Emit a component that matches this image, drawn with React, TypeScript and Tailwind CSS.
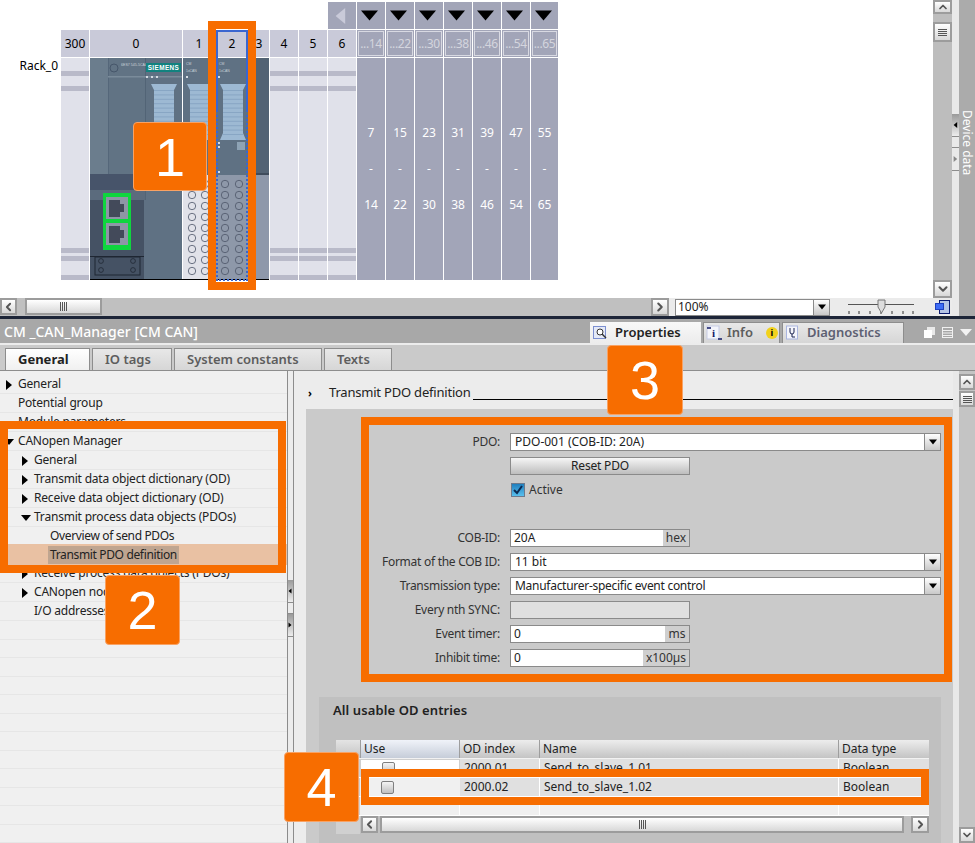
import { ChevronDown, ChevronLeft, ChevronRight, ChevronUp } from "lucide-react";
import type { ReactNode } from "react";

const bands = [13, 5, 10, 5, 157, 5, 3, 5, 14, 5];
const expansions = [
  ["...14", "7", "14", 28],
  ["...22", "15", "22", 28],
  ["...30", "23", "30", 28],
  ["...38", "31", "38", 28],
  ["...46", "39", "46", 28],
  ["...54", "47", "54", 28],
  ["...65", "55", "65", 27],
] as const;

function EmptySlot({ width }: { width: string }) {
  return (
    <div className={`flex flex-col ${width}`}>
      {bands.map((h, i) => (
        <div key={i} className={i % 2 ? "bg-[#b9bac9]" : "bg-[#e0e1ea]"} style={{ height: h }} />
      ))}
    </div>
  );
}

function HeaderCell({ label, width }: { label: string; width: string }) {
  return (
    <div className={`flex h-[27px] items-center justify-center bg-[#c9cad9] text-[12px] text-black ${width}`}>
      {label}
    </div>
  );
}

function Tri({ dir, className = "" }: { dir: "right" | "down" | "left"; className?: string }) {
  const pts = dir === "right" ? "1,0 7,5 1,10" : dir === "left" ? "7,0 1,5 7,10" : "0,2 10,2 5,8";
  return (
    <svg width="10" height="10" viewBox="0 0 10 10" className={className} fill="currentColor">
      <polygon points={pts} />
    </svg>
  );
}

// x is the page position of the connector's left edge
function Connector({ x }: { x: number }) {
  const lines = Array.from({ length: 11 }, (_, i) => 90 + i * 4.4);
  return (
    <g transform={`translate(${x - 180} -58)`}>
      <polygon points="90,84 116,84 113,90 113,133 116,140 90,140 93,133 93,90" fill="#9db9d3" />
      {lines.map((y) => (
        <rect key={y} x="93" y={y} width="20" height="1" fill="#88a6c4" />
      ))}
    </g>
  );
}

function Holes({ xs }: { xs: number[] }) {
  const ys = [184, 195, 206, 217, 228, 238, 249, 260, 271];
  return (
    <g fill="none" stroke="#4c5668" strokeWidth="0.8">
      {ys.flatMap((y) => xs.map((x) => <circle key={`${x}-${y}`} cx={x - 90} cy={y - 58} r="3.7" />))}
    </g>
  );
}

function Leds({ x, y, n = 1 }: { x: number; y: number; n?: number }) {
  return (
    <g fill="#d5dbe2">
      {Array.from({ length: n }, (_, i) => (
        <rect key={i} x={x - 90 + i * 5} y={y - 58} width="2" height="2" />
      ))}
    </g>
  );
}

function ModuleArt() {
  return (
    <svg width="179" height="222" viewBox="0 0 179 222" className="block shrink-0">
      <rect width="179" height="222" fill="#5f7183" />
      <rect x="0" width="18" height="116" fill="#6b7d8d" />
      <rect x="18" y="0" width="37" height="116" fill="#617384" />
      <rect x="18" y="0" width="1" height="116" fill="#55677a" />
      <rect x="55" y="0" width="1" height="142" fill="#526476" />
      <rect x="18" y="18" width="74" height="1.5" fill="#7a8b9a" />
      <circle cx="24" cy="10" r="4" fill="none" stroke="#46566a" />
      <text x="31" y="8" fontSize="3.6" fill="#c9d2da" fontFamily="Liberation Sans">6ES7 545-5CA00</text>
      <rect x="56" y="5" width="35" height="9" fill="#12827f" />
      <text x="73.5" y="12.2" fontSize="6.4" fontWeight="700" fill="#fff" textAnchor="middle" fontFamily="Liberation Sans" letterSpacing="0.4">SIEMENS</text>
      <Leds x={146} y={76} n={3} />
      <Connector x={151} />
      <rect x="0" y="116" width="92" height="16" fill="#47546a" />
      <rect x="0" y="132" width="55" height="10" fill="#5b6b7d" />
      <rect x="0" y="142" width="54" height="80" fill="#455264" />
      <rect x="13" y="135" width="28" height="57" fill="#0fd63e" />
      <rect x="16" y="139" width="22" height="22" fill="#8e96a6" />
      <rect x="16" y="165" width="22" height="22" fill="#8e96a6" />
      <path d="M19 142h11v4h4v8h-4v5h-11z" fill="#434a5a" />
      <path d="M19 168h11v4h4v8h-4v5h-11z" fill="#434a5a" />
      <rect x="0" y="198" width="54" height="1" fill="#1f2733" />
      <rect x="5" y="199" width="45" height="18" fill="none" stroke="#1f2733" />
      <g fill="none" stroke="#1f2733" strokeWidth="0.8">
        <circle cx="11" cy="203" r="2.4" />
        <circle cx="11" cy="212" r="2.4" />
        <circle cx="43" cy="203" r="2.4" />
        <circle cx="43" cy="212" r="2.4" />
      </g>
      <rect x="92" y="0" width="1" height="222" fill="#fff" />
      <rect x="93" y="117" width="33" height="105" fill="#e1e2e9" />
      <text x="96" y="7" fontSize="3.4" fill="#c9d2da" fontFamily="Liberation Sans">CM</text>
      <text x="96" y="14" fontSize="3.4" fill="#c9d2da" fontFamily="Liberation Sans">1xCAN</text>
      <Leds x={186} y={76} />
      <Connector x={187} />
      <Holes xs={[192, 205]} />
      <rect x="126" y="0" width="33" height="117" fill="#5f7183" />
      <rect x="126" y="117" width="33" height="105" fill="#8e98a9" />
      <text x="129" y="7" fontSize="3.4" fill="#c9d2da" fontFamily="Liberation Sans">CM</text>
      <text x="129" y="14" fontSize="3.4" fill="#c9d2da" fontFamily="Liberation Sans">1xCAN</text>
      <Leds x={218} y={76} />
      <Connector x={220} />
      <rect x="147" y="84" width="8" height="8" fill="#8ea3b5" />
      <Leds x={218} y={142} />
      <Leds x={218} y={146} />
      <Leds x={218} y={171} />
      <Holes xs={[225, 239]} />
      <rect x="159" y="0" width="20" height="117" fill="#536374" />
      <rect x="159" y="115" width="20" height="2" fill="#3f4c5c" />
      <rect x="159" y="117" width="20" height="105" fill="#8e98aa" />
      <rect x="0" y="221" width="179" height="1" fill="#000" />
    </svg>
  );
}

function ScrollBtn({ children, className = "" }: { children: ReactNode; className?: string }) {
  return (
    <div className={`flex shrink-0 items-center justify-center border-2 border-[#9c9c9c] bg-gradient-to-b from-white to-[#d8d8d8] text-[#555] ${className}`}>
      {children}
    </div>
  );
}

function Grip({ vertical = false }: { vertical?: boolean }) {
  return (
    <div className={`flex ${vertical ? "flex-col gap-px" : "gap-px"}`}>
      {[0, 1, 2, 3].map((i) => (
        <div key={i} className={`bg-[#555] ${vertical ? "h-px w-[9px]" : "h-[9px] w-px"}`} />
      ))}
    </div>
  );
}

function HandleBlock({ dir, className = "" }: { dir: "left" | "right"; className?: string }) {
  return (
    <div className={`flex h-[23px] items-center justify-center border-b border-[#8c8c8c] bg-gradient-to-b from-[#9a9a9a] to-[#ededed] text-black ${className}`}>
      <Tri dir={dir} className="h-[6px] w-[6px]" />
    </div>
  );
}

function TreeRow({ label, indent, arrow, selected }: { label?: string; indent: number; arrow?: "right" | "down"; selected?: boolean }) {
  return (
    <div
      className={`relative flex h-[19px] items-center border-b border-[#e6e6e6] text-[12px] ${
        indent === 50 ? "tracking-[-0.35px]" : "tracking-[-0.2px]"
      } ${selected ? "border-b-0 bg-[#e9c1a3] shadow-[0_-2px_0_#e9c1a3,0_1px_0_#e9c1a3]" : ""}`}
    >
      {arrow && (
        <Tri dir={arrow} className="absolute top-[5px] text-black" />
      )}
      <span
        className={`whitespace-nowrap text-[#222] ${selected ? "bg-[#bfa590] px-[2px]" : ""}`}
        style={{ marginLeft: selected ? indent - 2 : indent }}
      >
        {label}
      </span>
    </div>
  );
}

function TabLabel({ children, active, width }: { children: ReactNode; active?: boolean; width: string }) {
  return (
    <div
      className={`flex h-[22px] items-center border border-b-0 border-[#8d8d8d] pl-[12px] text-[13px] ${width} ${
        active ? "bg-gradient-to-b from-white to-[#f0f0f0] font-bold text-[#222]" : "bg-gradient-to-b from-[#e8e8e8] to-[#d6d6d6] font-semibold text-[#5d5d5d]"
      }`}
    >
      {children}
    </div>
  );
}

function DropArrow() {
  return (
    <div className="flex h-full w-[16px] items-center justify-center border-l border-[#8a8a8a] bg-gradient-to-b from-white to-[#c9c9c9] text-black">
      <Tri dir="down" className="h-[8px] w-[8px]" />
    </div>
  );
}

function Select({ value, tight }: { value: string; tight?: boolean }) {
  return (
    <div className="flex h-[18px] w-[431px] items-center justify-between border border-[#8a8a8a] bg-white pl-[4px]">
      <span className={tight ? "tracking-[-0.28px]" : ""}>{value}</span>
      <DropArrow />
    </div>
  );
}

function UnitInput({ value, unit, unitWidth }: { value?: string; unit: string; unitWidth: string }) {
  return (
    <div className="flex h-[18px] w-[180px] items-center border border-[#8a8a8a] bg-white pl-[3px]">
      <span className="flex-1">{value}</span>
      <span className={`flex h-full items-center justify-center bg-[#cfcfcf] text-[#333] ${unitWidth}`}>{unit}</span>
    </div>
  );
}

function FormRow({ label, children }: { label?: string; children?: ReactNode }) {
  return (
    <div className="flex h-[18px] items-center gap-[10px]">
      <div className="w-[194px] whitespace-nowrap text-right tracking-[-0.27px] text-[#333]">{label}</div>
      {children}
    </div>
  );
}

function Frame({ className }: { className: string }) {
  return <div className={`absolute border-[8px] border-[#f76d00] ${className}`} />;
}

function Badge({ n, className }: { n: string; className: string }) {
  return (
    <div
      className={`absolute flex items-center justify-center rounded-[4px] border border-[#f9a263] bg-[#f76d00] text-[54px] leading-none text-white ${className}`}
      style={{ fontFamily: '"Liberation Sans", sans-serif' }}
    >
      {n}
    </div>
  );
}

export default function App() {
  return (
    <div
      className="relative flex h-[843px] w-[975px] flex-col overflow-hidden bg-white text-[12px] text-[#222]"
      style={{ fontFamily: '"Noto Sans", sans-serif' }}
    >
      {/* device view */}
      <div className="flex h-[316px] shrink-0">
        <div className="flex min-w-0 flex-1 flex-col">
          <div className="flex h-[298px] pt-[2px]">
            <div className="w-[61px] shrink-0 pt-[55px] pr-[3px] text-right text-[12px] text-black">Rack_0</div>
            <div className="flex flex-col">
              <div className="mb-px flex h-[27px] gap-px pl-[267px]">
                <div className="flex w-[28px] items-center justify-center bg-[#a2a5b8] text-[#c9cad9]">
                  <Tri dir="left" className="h-[16px] w-[16px]" />
                </div>
                {expansions.map(([key, , , w]) => (
                  <div key={key} className="flex items-center justify-center bg-[#a2a5b8] pr-[3px] text-black" style={{ width: w }}>
                    <Tri dir="down" className="h-[17px] w-[17px] shrink-0" />
                  </div>
                ))}
              </div>
              <div className="flex gap-px">
                <HeaderCell label="300" width="w-[28px]" />
                <HeaderCell label="0" width="w-[92px]" />
                <HeaderCell label="1" width="w-[32px]" />
                <HeaderCell label="2" width="w-[32px]" />
                <HeaderCell label="3" width="w-[20px]" />
                <HeaderCell label="4" width="w-[28px]" />
                <HeaderCell label="5" width="w-[28px]" />
                <HeaderCell label="6" width="w-[28px]" />
                {expansions.map(([key, , , w]) => (
                  <div key={key} className="flex h-[27px] items-center justify-center bg-[#a2a5b8] p-px" style={{ width: w }}>
                    <div className="flex h-full w-full items-center justify-center border border-[#d8d9e2] text-[12px] tracking-[-0.4px] text-[#d4d5de]">{key}</div>
                  </div>
                ))}
              </div>
              <div className="mt-px flex gap-px">
                <EmptySlot width="w-[28px]" />
                <ModuleArt />
                <EmptySlot width="w-[28px]" />
                <EmptySlot width="w-[28px]" />
                <EmptySlot width="w-[28px]" />
                {expansions.map(([key, from, to, w]) => (
                  <div key={key} className="flex h-[222px] flex-col items-center gap-[18px] bg-[#a2a5b8] pt-[66px] text-[12px] text-white" style={{ width: w }}>
                    <span className="h-[18px] leading-[18px]">{from}</span>
                    <span className="h-[18px] leading-[18px]">-</span>
                    <span className="h-[18px] leading-[18px]">{to}</span>
                  </div>
                ))}
              </div>
            </div>
          </div>
          <div className="flex h-[18px] items-stretch">
            <div className="flex w-[651px] bg-[#c0c0c0] pb-px">
              <ScrollBtn className="w-[17px]"><ChevronLeft size={14} strokeWidth={3.5} /></ScrollBtn>
              <ScrollBtn className="ml-[8px] w-[77px]"><Grip /></ScrollBtn>
            </div>
            <div className="flex flex-1 items-center bg-[#ebebeb]">
              <ScrollBtn className="h-[18px] w-[18px]"><ChevronRight size={14} strokeWidth={3.5} /></ScrollBtn>
              <div className="ml-[6px] flex h-[17px] w-[155px] items-center justify-between border border-[#8a8a8a] bg-white pl-[2px] text-[12px] text-[#222]">
                <span>100%</span>
                <DropArrow />
              </div>
              <svg width="68" height="16" viewBox="0 0 68 16" className="ml-[18px]">
                <rect x="0" y="5" width="66" height="1" fill="#555" />
                <path d="M1 12v3M11 12v3M22 12v3M33 12v3M44 12v3M55 12v3M65 12v3" stroke="#333" />
                <path d="M30 1h7v7l-3.5 6-3.5-6z" fill="#ddd" stroke="#777" />
              </svg>
            </div>
          </div>
        </div>
        <div className="flex w-[19px] shrink-0 flex-col bg-[#bdbdbd]">
          <ScrollBtn className="h-[14px]"><ChevronUp size={12} strokeWidth={3.5} /></ScrollBtn>
          <ScrollBtn className="mt-[8px] h-[20px]"><Grip vertical /></ScrollBtn>
          <div className="flex-1" />
          <ScrollBtn className="h-[18px]"><ChevronDown size={14} strokeWidth={3.5} /></ScrollBtn>
          <div className="flex h-[18px] items-center justify-center bg-[#ebebeb]">
            <svg width="15" height="14" viewBox="0 0 15 14">
              <rect x="4.5" y="0.5" width="10" height="13" fill="#b5c4e6" stroke="#0a1a70" />
              <rect x="0.5" y="3.5" width="8" height="6" fill="#3e6cf5" stroke="#1d3fc0" />
            </svg>
          </div>
        </div>
        <div className="flex w-[7px] shrink-0 flex-col bg-[#e9e9e9] pt-[114px]">
          <HandleBlock dir="left" />
          <div className="h-[11px] border-b border-[#8c8c8c]" />
          <div className="flex h-[23px] items-center justify-center border-b border-[#8c8c8c] text-[#888]">
            <Tri dir="right" className="h-[6px] w-[6px]" />
          </div>
        </div>
        <div className="flex w-[16px] shrink-0 justify-center bg-[#ababab] pt-[110px] pl-[1px]">
          <span className="h-fit text-[12px] leading-[15px] whitespace-nowrap text-white [writing-mode:vertical-rl]">Device data</span>
        </div>
      </div>

      <div className="h-[3px] shrink-0 bg-[#1d2538]" />

      {/* inspector title bar */}
      <div className="flex h-[24px] shrink-0 items-end justify-between bg-[#a8a8a8]">
        <div className="self-center pl-[4px] text-[14px] font-medium text-white">CM _CAN_Manager [CM CAN]</div>
        <div className="flex items-end">
          <div className="flex items-end gap-[2px]">
            <div className="flex h-[21px] w-[111px] items-center gap-[8px] bg-gradient-to-b from-[#f8f8f8] to-[#ececec] pl-[3px] text-[13px] font-semibold text-[#222]">
              <svg width="14" height="14" viewBox="0 0 14 14">
                <rect x="0.5" y="0.5" width="12" height="12" fill="#e4e9f7" stroke="#7c8fd0" />
                <circle cx="7" cy="6" r="3" fill="#fff" stroke="#333" />
                <path d="M9 8l4 4" stroke="#333" strokeWidth="1.5" />
              </svg>
              Properties
            </div>
            <div className="flex h-[21px] w-[77px] items-center gap-[5px] border border-b-0 border-[#8d8d8d] bg-gradient-to-b from-[#e8e8e8] to-[#d6d6d6] pl-[2px] text-[13px] font-semibold text-[#5d5d5d]">
              <svg width="16" height="16" viewBox="0 0 16 16">
                <rect x="1" y="1" width="12" height="13" fill="#f4f5fb" stroke="#c5cbe6" />
                <path d="M1 3h4M12 14h4" stroke="#111a66" strokeWidth="1.5" />
                <text x="6" y="12" fontSize="11" fontWeight="700" fill="#111a66" fontFamily="Liberation Serif">i</text>
              </svg>
              <span className="mr-[8px]">Info</span>
              <span className="flex h-[12px] w-[12px] items-center justify-center rounded-full bg-[#f2d21c] text-[9px] font-bold text-black">i</span>
            </div>
            <div className="flex h-[21px] w-[122px] items-center gap-[7px] border border-b-0 border-[#8d8d8d] bg-gradient-to-b from-[#e8e8e8] to-[#d6d6d6] pl-[3px] text-[13px] font-semibold text-[#5d6072]">
              <svg width="14" height="16" viewBox="0 0 14 16">
                <rect x="0.5" y="1" width="11" height="13" fill="#f4f5fb" stroke="#a9b5e0" />
                <path d="M4 3v4a2 2 0 0 0 4 0V3M6 9v3h3" fill="none" stroke="#1a2250" />
              </svg>
              Diagnostics
            </div>
          </div>
          <div className="flex h-[21px] w-[71px] items-center justify-end gap-[7px] pr-[3px]">
            <svg width="11" height="11" viewBox="0 0 11 11">
              <rect x="3" y="0" width="8" height="8" fill="#fff" opacity="0.75" />
              <rect x="0" y="3" width="8" height="8" fill="#fff" />
            </svg>
            <svg width="11" height="11" viewBox="0 0 11 11" fill="none" stroke="#f0f0f0">
              <rect x="0.5" y="0.5" width="10" height="10" />
              <path d="M0 3.5h11M0 6h11M0 8.5h11" />
            </svg>
            <svg width="12" height="8" viewBox="0 0 12 8"><polygon points="0,0 12,0 6,7" fill="#f2f2f2" /></svg>
          </div>
        </div>
      </div>

      {/* secondary tabs */}
      <div className="flex h-[28px] shrink-0 items-end gap-[2px] border-t-2 border-b border-[#8d8d8d] border-t-[#ececec] bg-[#cacaca] pl-[5px]">
        <TabLabel active width="w-[85px]">General</TabLabel>
        <TabLabel width="w-[80px]">IO tags</TabLabel>
        <TabLabel width="w-[148px]">System constants</TabLabel>
        <TabLabel width="w-[68px]">Texts</TabLabel>
      </div>

      <div className="flex min-h-0 flex-1">
        {/* tree */}
        <div className="flex w-[287px] shrink-0 flex-col overflow-hidden bg-[#f0f0f0] pt-[4px]">
          <div className="[&_svg]:left-[5px]"><TreeRow label="General" indent={18} arrow="right" /></div>
          <TreeRow label="Potential group" indent={18} />
          <TreeRow label="Module parameters" indent={18} />
          <div className="[&_svg]:left-[4px]"><TreeRow label="CANopen Manager" indent={18} arrow="down" /></div>
          <div className="[&_svg]:left-[21px]">
            <TreeRow label="General" indent={34} arrow="right" />
            <TreeRow label="Transmit data object dictionary (OD)" indent={34} arrow="right" />
            <TreeRow label="Receive data object dictionary (OD)" indent={34} arrow="right" />
            <TreeRow label="Transmit process data objects (PDOs)" indent={34} arrow="down" />
          </div>
          <TreeRow label="Overview of send PDOs" indent={50} />
          <TreeRow label="Transmit PDO definition" indent={50} selected />
          <div className="[&_svg]:left-[21px]">
            <TreeRow label="Receive process data objects (PDOs)" indent={34} arrow="right" />
            <TreeRow label="CANopen nodes" indent={34} arrow="right" />
          </div>
          <TreeRow label="I/O addresses" indent={34} />
          {[0, 1, 2, 3, 4, 5, 6, 7, 8, 9, 10, 11].map((i) => (
            <TreeRow key={i} indent={0} />
          ))}
        </div>

        {/* splitter */}
        <div className="flex w-[7px] shrink-0 flex-col border-x border-[#8c8c8c] bg-[#ececec] pt-[209px]">
          <HandleBlock dir="left" />
          <div className="h-[11px] border-b border-[#8c8c8c]" />
          <HandleBlock dir="right" />
        </div>
        <div className="w-[12px] shrink-0 bg-[#ececec]" />

        {/* form */}
        <div className="flex min-w-0 flex-1 flex-col">
          <div className="flex h-[38px] shrink-0 items-center bg-[#ececec] pt-[6px]">
            <span className="w-[23px] pl-[2px] text-[11px] font-bold text-black">›</span>
            <span className="text-[13px] tracking-[-0.2px] text-[#222]">Transmit PDO definition</span>
            <div className="mt-[12px] ml-[2px] h-px flex-1 bg-black" />
          </div>
          <div className="flex min-h-0 flex-1 flex-col bg-[#cacaca] pt-[24px]">
            <div className="flex flex-col gap-[6px]">
              <FormRow label="PDO:"><Select value="PDO-001 (COB-ID: 20A)" /></FormRow>
              <FormRow>
                <div className="flex h-[18px] w-[180px] items-center justify-center border border-[#8a8a8a] bg-gradient-to-b from-[#f6f6f6] to-[#bdbdbd] tracking-[-0.2px] text-[#222]">Reset PDO</div>
              </FormRow>
              <FormRow>
                <div className="flex items-center gap-[4px] pl-px">
                  <div className="flex h-[14px] w-[14px] items-center justify-center border border-[#6d7a8c] bg-gradient-to-b from-[#1f7fbe] to-[#59c0ee]">
                    <svg width="10" height="10" viewBox="0 0 10 10" fill="none" stroke="#0b2a52" strokeWidth="2">
                      <path d="M1 5l3 3 5-7" />
                    </svg>
                  </div>
                  <span className="text-[#333]">Active</span>
                </div>
              </FormRow>
              <FormRow />
              <FormRow label="COB-ID:"><UnitInput value="20A" unit="hex" unitWidth="w-[26px]" /></FormRow>
              <FormRow label="Format of the COB ID:"><Select value="11 bit" /></FormRow>
              <FormRow label="Transmission type:"><Select value="Manufacturer-specific event control" tight /></FormRow>
              <FormRow label="Every nth SYNC:">
                <div className="h-[18px] w-[180px] border border-[#8a8a8a] bg-[#dfdfdf]" />
              </FormRow>
              <FormRow label="Event timer:"><UnitInput value="0" unit="ms" unitWidth="w-[24px]" /></FormRow>
              <FormRow label="Inhibit time:"><UnitInput value="0" unit="x100µs" unitWidth="w-[46px]" /></FormRow>
            </div>

            <div className="mt-[30px] mr-[12px] ml-[13px] flex flex-1 flex-col bg-[#c0c0c0] pr-[12px] pl-[17px]">
              <div className="-ml-[3px] h-[43px] shrink-0 pt-[4px] text-[13px] font-semibold tracking-[0.1px] text-[#222]">All usable OD entries</div>
              <div className="flex flex-col">
                <div className="grid h-[19px] grid-cols-[24px_100px_80px_299px_90px] border-b-2 border-[#f2f2f2] text-[#222]">
                  <div className="bg-gradient-to-b from-[#e4e4e4] to-[#c4c4c4]" />
                  <div className="flex items-center border-x border-[#9e9e9e] bg-gradient-to-b from-[#f0f3f9] to-[#c6cdd9] pl-[3px]">Use</div>
                  <div className="flex items-center border-r border-[#9e9e9e] bg-gradient-to-b from-[#ededed] to-[#c4c4c4] pl-[3px]">OD index</div>
                  <div className="flex items-center border-r border-[#9e9e9e] bg-gradient-to-b from-[#ededed] to-[#c4c4c4] pl-[3px]">Name</div>
                  <div className="flex items-center bg-gradient-to-b from-[#ededed] to-[#c4c4c4] pl-[3px]">Data type</div>
                </div>
                {[
                  ["2000.01", "Send_to_slave_1.01"],
                  ["2000.02", "Send_to_slave_1.02"],
                ].map(([index, name], i) => (
                  <div key={index} className="grid h-[19px] grid-cols-[24px_100px_80px_299px_90px] border-b border-white">
                    <div className="bg-[#d0d0d0]" />
                    <div className={`flex items-center pl-[21px] ${i === 0 ? "border border-[#cfcfcf] bg-white" : "bg-[#f0f0f0]"}`}>
                      <div className="h-[13px] w-[13px] rounded-[2px] border border-[#7f7f7f] bg-gradient-to-b from-[#f4f4f4] to-[#c0c0c0]" />
                    </div>
                    <div className="flex items-center border-r border-white bg-[#e0e0e0] pl-[4px]">{index}</div>
                    <div className="flex items-center border-r border-white bg-[#e0e0e0] pl-[4px]">{name}</div>
                    <div className="flex items-center bg-[#e0e0e0] pl-[4px]">Boolean</div>
                  </div>
                ))}
                <div className="grid h-[19px] grid-cols-[24px_100px_80px_299px_90px] border-b border-white">
                  <div className="bg-[#d0d0d0]" />
                  <div className="border-r border-white bg-[#f0f0f0]" />
                  <div className="border-r border-white bg-[#f0f0f0]" />
                  <div className="border-r border-white bg-[#f0f0f0]" />
                  <div className="bg-[#f0f0f0]" />
                </div>
                <div className="flex h-[18px]">
                  <div className="w-[24px] shrink-0 bg-[#d0d0d0]" />
                  <div className="flex flex-1 bg-[#c0c0c0] pb-px">
                    <ScrollBtn className="ml-px w-[17px]"><ChevronLeft size={13} strokeWidth={3.5} /></ScrollBtn>
                    <ScrollBtn className="ml-[2px] flex-1"><Grip /></ScrollBtn>
                    <ScrollBtn className="ml-[7px] w-[18px]"><ChevronRight size={13} strokeWidth={3.5} /></ScrollBtn>
                  </div>
                </div>
              </div>
            </div>
          </div>
        </div>
        <div className="w-[6px] shrink-0 bg-[#e8e8e8]" />

        {/* right scrollbar */}
        <div className="flex w-[16px] shrink-0 flex-col bg-[#c4c4c4] pt-[3px]">
          <ScrollBtn className="h-[16px]"><ChevronUp size={12} strokeWidth={3.5} /></ScrollBtn>
          <ScrollBtn className="mt-px h-[16px]"><Grip vertical /></ScrollBtn>
          <div className="flex-1" />
          <ScrollBtn className="h-[16px]"><ChevronDown size={12} strokeWidth={3.5} /></ScrollBtn>
        </div>
      </div>

      {/* callouts over the screenshot */}
      <div className="absolute top-[30px] left-[216px] h-[80px] w-[32px] border-2 border-b-0 border-[#3a66d0]" />
      <div className="absolute top-[110px] left-[216px] h-[171px] w-[32px] border-2 border-t-0 border-dotted border-[#3a66d0]" />
      <Frame className="top-[21px] left-[208px] h-[269px] w-[48px]" />
      <Frame className="top-[421px] left-0 h-[152px] w-[286px]" />
      <Frame className="top-[417px] left-[361px] h-[265px] w-[591px]" />
      <Frame className="top-[769px] left-[361px] h-[36px] w-[568px]" />
      <Badge n="1" className="top-[122px] left-[133px] h-[69px] w-[74px]" />
      <Badge n="2" className="top-[575px] left-[105px] h-[70px] w-[75px]" />
      <Badge n="3" className="top-[345px] left-[607px] h-[70px] w-[76px]" />
      <Badge n="4" className="top-[752px] left-[284px] h-[70px] w-[75px]" />
    </div>
  );
}
